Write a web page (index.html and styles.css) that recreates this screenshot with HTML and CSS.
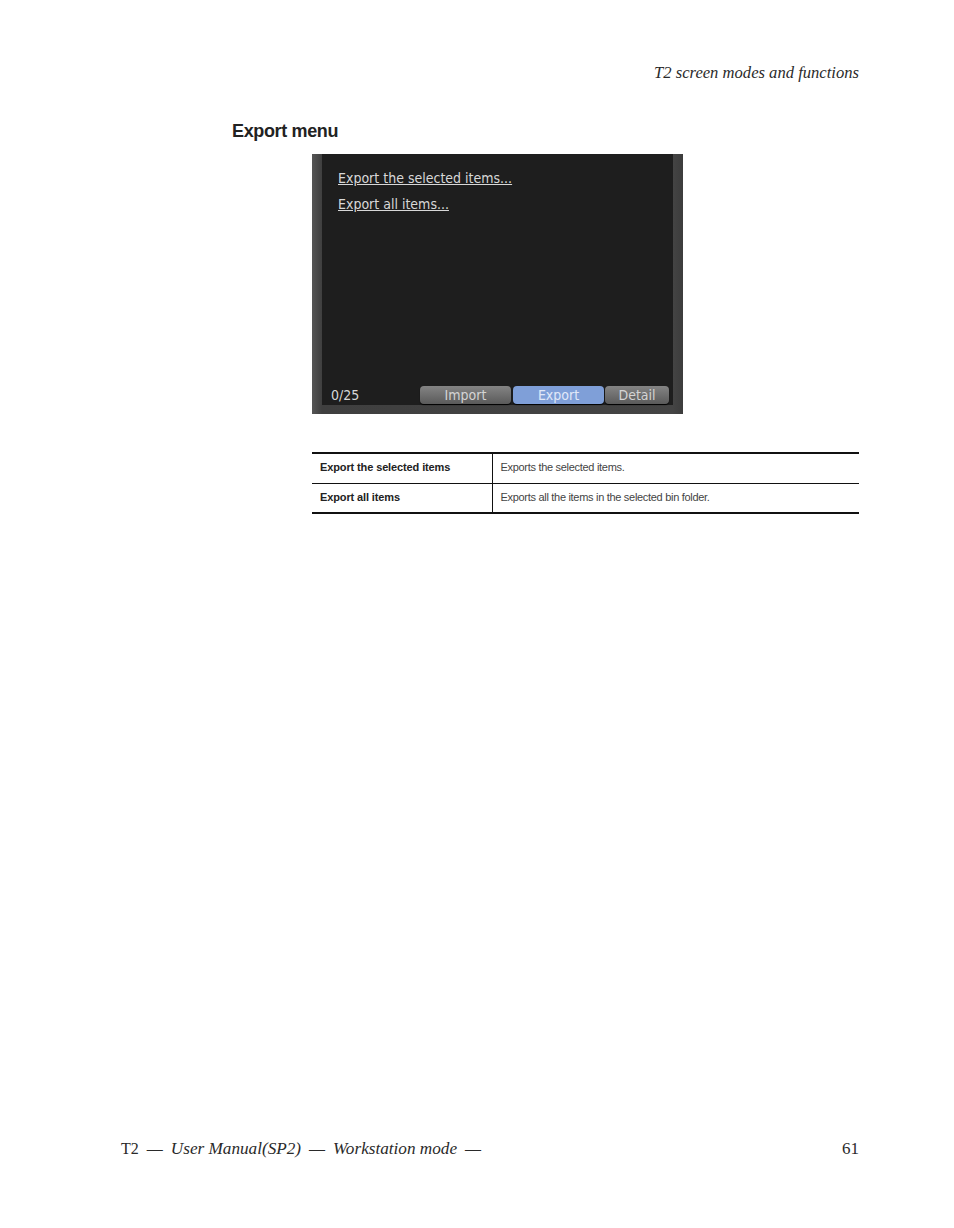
FILE: index.html
```html
<!DOCTYPE html>
<html lang="en">
<head>
  <meta charset="UTF-8">
  <title>Export menu</title>
  <link rel="stylesheet" href="styles.css">
</head>
<body>
  <div class="page-header">T2 screen modes and functions</div>

  <h2 class="section-title">Export menu</h2>

  <div class="screen">
    <div class="screen-inner">
      <div class="menu-links">
        <span class="menu-link">Export the selected items...</span>
        <span class="menu-link">Export all items...</span>
      </div>
      <div class="screen-bar">
        <span class="counter">0/25</span>
        <div class="tabs">
          <span class="tab tab-wide">Import</span>
          <span class="tab tab-wide tab-active">Export</span>
          <span class="tab tab-small">Detail</span>
        </div>
      </div>
    </div>
  </div>

  <table class="info-table">
    <tr>
      <th>Export the selected items</th>
      <td>Exports the selected items.</td>
    </tr>
    <tr>
      <th>Export all items</th>
      <td>Exports all the items in the selected bin folder.</td>
    </tr>
  </table>

  <div class="page-footer">
    <span>T2 &nbsp;— &nbsp;<em>User Manual(SP2)</em> &nbsp;— &nbsp;<em>Workstation mode</em> &nbsp;—</span>
    <span class="page-number">61</span>
  </div>
</body>
</html>
```

FILE: styles.css
```css
body {
  margin: 0;
  height: 1228px;
  padding: 63px 95px 0 121px;
  box-sizing: border-box;
  background-color: white;
  display: flex;
  flex-direction: column;
  font-family: "Liberation Serif", serif;
  color: #2a2a2a;
}

.page-header {
  text-align: right;
  font-style: italic;
  font-size: 16.6px;
  line-height: 20px;
}

.section-title {
  margin: 37px 0 0 111px;
  font-family: "Liberation Sans", sans-serif;
  font-size: 18px;
  line-height: 22px;
  font-weight: bold;
  letter-spacing: -0.35px;
  color: #222;
}

.screen {
  margin: 12px 0 0 191px;
  width: 371px;
  height: 260px;
  padding: 0 10px 9px;
  box-sizing: border-box;
  background: linear-gradient(90deg, #555 0, #3f3f3f 10px, #444 361px, #3c3c3c 371px);
}

.screen-inner {
  height: 100%;
  background-color: #1e1e1e;
  display: flex;
  flex-direction: column;
  justify-content: space-between;
  font-family: "DejaVu Sans", sans-serif;
  font-stretch: condensed;
  font-size: 14px;
  color: #d8d8d8;
}

.menu-links {
  display: flex;
  flex-direction: column;
  align-items: flex-start;
  gap: 9px;
  padding: 16px 0 0 16px;
}

.menu-link {
  line-height: 17px;
  text-decoration: underline;
}

.screen-bar {
  display: flex;
  align-items: center;
  justify-content: space-between;
  padding: 0 4px 1px 9px;
}

.tabs {
  display: flex;
  gap: 2px;
}

.tab {
  height: 18px;
  line-height: 18px;
  text-align: center;
  border-radius: 4px;
  color: #d4d4d4;
  background: linear-gradient(#848484, #5a5a5a);
  box-shadow: 0 1px 1px #000;
}

.tab-wide {
  width: 91px;
}

.tab-small {
  width: 64px;
  margin-left: -1px;
}

.tab-active {
  background: #7f9fd8;
  color: #e0e8f8;
}

.info-table {
  margin: 38px 0 0 191px;
  width: 547px;
  border-collapse: collapse;
  border-top: 2px solid #111;
  border-bottom: 2px solid #111;
  font-family: "Liberation Sans", sans-serif;
  font-size: 11px;
  letter-spacing: -0.3px;
  color: #444;
}

.info-table th,
.info-table td {
  height: 30px;
  padding: 0 8px 3px;
  box-sizing: border-box;
  text-align: left;
}

.info-table th {
  width: 180px;
  font-weight: bold;
  letter-spacing: -0.12px;
  color: #222;
  border-right: 1px solid #111;
}

.info-table tr + tr th,
.info-table tr + tr td {
  padding-bottom: 1px;
  border-top: 1px solid #111;
}

.page-footer {
  margin-top: auto;
  margin-bottom: 69px;
  display: flex;
  justify-content: space-between;
  align-items: baseline;
  font-size: 16px;
  line-height: 20px;
}

.page-footer em {
  font-size: 17.2px;
}

.page-number {
  font-size: 17px;
}
```
